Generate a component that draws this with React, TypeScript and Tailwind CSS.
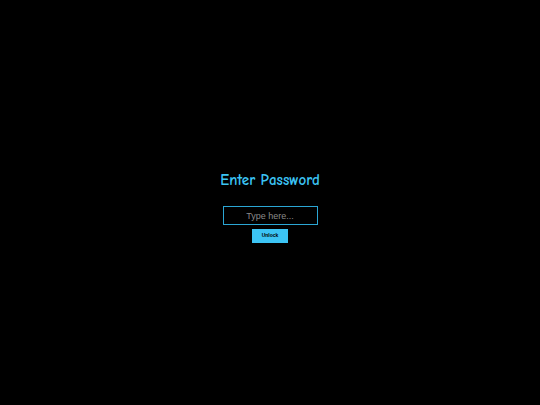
export default function App() {
  return (
    <div className="w-[540px] h-[405px] bg-black flex flex-col items-center pt-[171px]">
      <h1 className="text-[15px] leading-[18px] font-bold text-[#3cc4f4] tracking-normal font-['Comic_Sans_MS','Comic_Neue','DejaVu_Sans',sans-serif]">
        Enter Password
      </h1>
      <input
        type="password"
        placeholder="Type here..."
        className="mt-[17px] w-[95px] h-[19px] bg-black border border-[#2ba6d4] text-center text-[9px] text-gray-300 placeholder:text-[#8a8a8a] outline-none font-['Liberation_Sans',Arial,sans-serif]"
      />
      <button className="mt-[4px] w-[36px] h-[14px] bg-[#3cc4f4] text-black text-[5px] font-bold flex items-center justify-center font-['Liberation_Sans',Arial,sans-serif]">
        Unlock
      </button>
    </div>
  );
}
